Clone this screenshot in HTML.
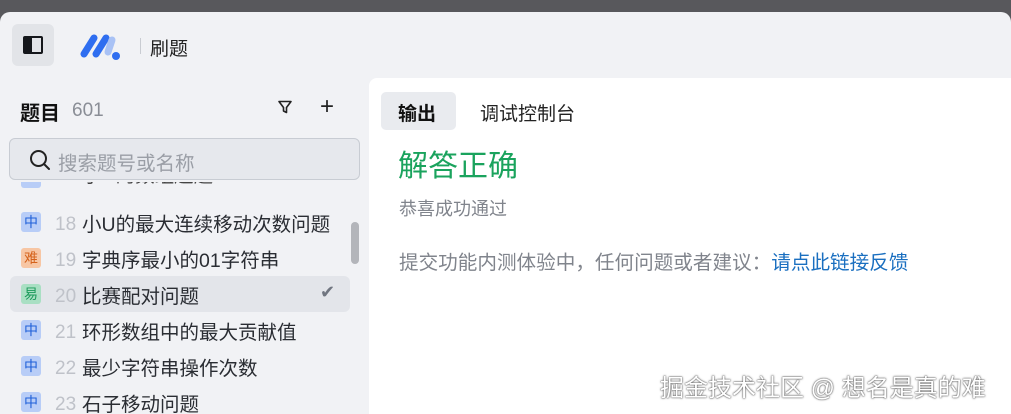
<!DOCTYPE html>
<html><head><meta charset="utf-8"><style>
*{margin:0;padding:0;box-sizing:border-box}
body{width:1011px;height:414px;overflow:hidden;background:#58585c;font-family:"Liberation Sans","Noto Sans CJK SC",sans-serif;position:relative}
.win{position:absolute;left:0;top:12px;width:1011px;height:402px;background:#f1f2f5;border-radius:10px 10px 0 0}
.abs{position:absolute}
.tag{position:absolute;left:21px;width:20px;height:20px;border-radius:3px;font-size:14px;line-height:20px;text-align:center}
.zh{background:#b8cdf7;color:#1e5fd8}
.nan{background:#f7c6a4;color:#d5621b}
.yi{background:#a9dfc3;color:#1b9a5a}
.num{position:absolute;left:55px;font-size:19px;color:#bfc2c9;margin-top:4px}
.tt{position:absolute;left:82px;font-size:19.5px;color:#2a2d33;white-space:nowrap;margin-top:-1px}
</style></head><body>
<div class="win">
 <div class="abs" style="left:12px;top:12px;width:42px;height:42px;background:#e2e4e8;border-radius:6px"></div>
 <div class="abs" style="left:23px;top:24px;width:20px;height:18px;border:2.5px solid #15171b;border-radius:2px"><div style="width:7px;height:100%;background:#15171b"></div></div>
 <svg class="abs" style="left:80px;top:18px" width="42" height="30" viewBox="0 0 42 30"><g stroke-linecap="round" stroke-width="7"><line x1="4" y1="24" x2="14" y2="8" stroke="#2f6ef0"/><line x1="16" y1="24" x2="26" y2="8" stroke="#2f6ef0"/><line x1="28" y1="22" x2="32" y2="10" stroke="#a9c2f5"/></g><circle cx="36" cy="26" r="4" fill="#2f6ef0"/></svg>
 <div class="abs" style="left:140px;top:26px;width:1px;height:16px;background:#c9ccd2"></div>
 <div class="abs" style="left:150px;top:22px;font-size:19px;color:#222">刷题</div>
 <div class="abs" style="left:20px;top:85px;font-size:20px;font-weight:bold;color:#111">题目</div>
 <div class="abs" style="left:72px;top:88px;font-size:19px;color:#8a8e96">601</div>
 <svg class="abs" style="left:277px;top:87px" width="16" height="16" viewBox="0 0 16 16"><path d="M2 2.5h12l-4.5 6v5l-3-1.5v-3.5z" fill="none" stroke="#222" stroke-width="1.6" stroke-linejoin="round"/></svg>
 <div class="abs" style="left:320px;top:81px;font-size:24px;color:#222">+</div>
 <div class="abs" style="left:9px;top:126px;width:351px;height:42px;border:1px solid #c8ccd3;border-radius:6px;background:#e6e8ed"></div>
 <svg class="abs" style="left:29px;top:137px" width="22" height="22" viewBox="0 0 22 22"><circle cx="9.5" cy="9.5" r="7.5" fill="none" stroke="#222" stroke-width="2"/><line x1="15" y1="15" x2="20" y2="20" stroke="#222" stroke-width="2" stroke-linecap="round"/></svg>
 <div class="abs" style="left:58px;top:135px;font-size:19.5px;color:#9a9ea6">搜索题号或名称</div>
 <div class="abs" style="left:0;top:170px;width:368px;height:232px;overflow:hidden">
  <div class="tag zh" style="top:-14px"></div><div class="tt" style="top:-22px;color:#444">小U的数组趣题</div>
  <div class="tag zh" style="top:30px">中</div><div class="num" style="top:28px">18</div><div class="tt" style="top:27px">小U的最大连续移动次数问题</div>
  <div class="tag nan" style="top:66px">难</div><div class="num" style="top:64px">19</div><div class="tt" style="top:63px">字典序最小的01字符串</div>
  <div class="abs" style="left:10px;top:94px;width:340px;height:36px;background:#e3e5ea;border-radius:6px"></div>
  <div class="tag yi" style="top:102px">易</div><div class="num" style="top:100px">20</div><div class="tt" style="top:99px">比赛配对问题</div>
  <div class="abs" style="left:320px;top:100px;font-size:18px;color:#707580">✔</div>
  <div class="tag zh" style="top:138px">中</div><div class="num" style="top:136px">21</div><div class="tt" style="top:135px">环形数组中的最大贡献值</div>
  <div class="tag zh" style="top:174px">中</div><div class="num" style="top:172px">22</div><div class="tt" style="top:171px">最少字符串操作次数</div>
  <div class="tag zh" style="top:210px">中</div><div class="num" style="top:208px">23</div><div class="tt" style="top:207px">石子移动问题</div>
  <div class="abs" style="left:351px;top:40px;width:8px;height:42px;background:#b3b5ba;border-radius:4px"></div>
 </div>
 <div class="abs" style="left:369px;top:66px;width:642px;height:336px;background:#fff;border-radius:8px 0 0 0">
  <div class="abs" style="left:12px;top:14px;width:75px;height:38px;background:#e9ebef;border-radius:5px"></div>
  <div class="abs" style="left:29px;top:21px;font-size:19px;font-weight:bold;color:#111">输出</div>
  <div class="abs" style="left:111px;top:21px;font-size:19px;color:#222">调试控制台</div>
  <div class="abs" style="left:29px;top:63px;font-size:30px;color:#1aa35d">解答正确</div>
  <div class="abs" style="left:30px;top:117px;font-size:18px;color:#80848c">恭喜成功通过</div>
  <div class="abs" style="left:30px;top:168px;font-size:19.6px;color:#80848c;white-space:nowrap">提交功能内测体验中，任何问题或者建议：<span style="color:#1a6fc0">请点此链接反馈</span></div>
  <div class="abs" style="left:291px;top:290px;font-size:24px;color:#fff;white-space:nowrap;text-shadow:0 0 2px #555,0 0 1px #333">掘金技术社区 @ 想名是真的难</div>
 </div>
</div>
</body></html>
